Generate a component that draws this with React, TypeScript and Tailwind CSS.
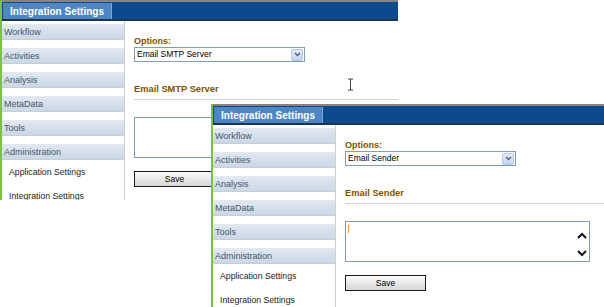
const navItems = ["Workflow", "Activities", "Analysis", "MetaData", "Tools"]

function Chevron({ up }: { up?: boolean }) {
  return (
    <svg width="10" height="7" viewBox="0 0 10 7" className="block">
      <path d={up ? "M1 6 L5 2 L9 6" : "M1 1 L5 5 L9 1"} fill="none" stroke="#111" strokeWidth="2" />
    </svg>
  )
}

function Window({ option, heading, caret }: { option: string; heading: string; caret?: boolean }) {
  return (
    <div className="flex flex-col h-full bg-white border-l-2 border-[#7cc242] font-['Liberation_Sans',Arial,sans-serif]">
      <div className="flex h-[21px] shrink-0 border-t-2 border-[#858585] border-b-2 border-b-[#1e3552] bg-[#0c4a8d]">
        <div className="ml-[1px] mt-[1px] w-[109px] flex items-center justify-center bg-[#4e85c5] border-r border-[#7da6d6] text-white font-bold text-[10px]">
          Integration Settings
        </div>
      </div>
      <div className="flex flex-1">
        <div className="w-[123px] shrink-0 border-r border-[#cfcfcf] pt-[3px] flex flex-col">
          {navItems.map((n) => (
            <div key={n} className="h-[24px]">
              <div className="h-[16px] pl-[2px] pt-[3px] flex items-center bg-gradient-to-b from-[#e2e9f1] to-[#cbd7e5] border-b border-[#c2cedc] text-[9px] text-[#46566a]">
                {n}
              </div>
            </div>
          ))}
          <div className="h-[16px] pl-[2px] pt-[3px] flex items-center bg-gradient-to-b from-[#e2e9f1] to-[#cbd7e5] border-b border-[#c2cedc] text-[9px] text-[#46566a]">
            Administration
          </div>
          <div className="h-[24px] pl-[7px] pt-[1px] flex items-center text-[8.7px] text-[#1c1c1c]">Application Settings</div>
          <div className="h-[24px] pl-[7px] pt-[1px] flex items-center text-[8.7px] text-[#1c1c1c]">Integration Settings</div>
        </div>
        <div className="flex-1 pl-[9px] pt-[15px]">
          <div className="text-[9px] leading-[11px] font-bold text-[#7d5300]">Options:</div>
          <div className="w-[171px] h-[15px] border border-[#7f9db9] flex items-center justify-between pl-[2px] pr-[1px] text-[8.5px] text-black">
            <span>{option}</span>
            <div className="w-[12px] h-[12px] rounded-[2px] border border-[#b5c7e6] bg-gradient-to-b from-[#e6eefc] to-[#c4d5f3] flex items-center justify-center">
              <svg width="7" height="5" viewBox="0 0 7 5">
                <path d="M1 1 L3.5 3.5 L6 1" fill="none" stroke="#4d6289" strokeWidth="1.5" />
              </svg>
            </div>
          </div>
          <div className="mt-[21px] pb-[4px] border-b border-[#d2d2d2] text-[9.3px] leading-[12px] font-bold text-[#7d5300]">
            {heading}
          </div>
          <div className="relative mt-[17px] w-[245px] h-[41px] border border-[#7f9db9] bg-white">
            {caret && <div className="absolute left-[2px] top-[3px] w-[1px] h-[8px] bg-[#f0a030]" />}
            <div className="absolute right-[2px] top-[10px] flex flex-col gap-[11px]">
              <Chevron up />
              <Chevron />
            </div>
          </div>
          <button className="mt-[13px] w-[81px] h-[16px] border border-[#1a1a1a] bg-gradient-to-b from-[#fbfbfb] to-[#d6d6d6] text-[8.5px] text-black flex items-center justify-center">
            Save
          </button>
        </div>
      </div>
    </div>
  )
}

export default function App() {
  return (
    <div className="relative w-[604px] h-[307px] overflow-hidden bg-white">
      <div className="w-[398px] h-[200px] overflow-hidden">
        <Window option="Email SMTP Server" heading="Email SMTP Server" />
      </div>
      <svg width="7" height="13" viewBox="0 0 7 13" className="absolute left-[347px] top-[78px]">
        <path d="M1 1 H6 M3.5 1 V12 M1 12 H6" fill="none" stroke="#444" strokeWidth="1" />
      </svg>
      <div className="absolute left-[211px] top-[104px] w-[393px] h-[203px] overflow-hidden">
        <Window option="Email Sender" heading="Email Sender" caret />
      </div>
    </div>
  )
}
